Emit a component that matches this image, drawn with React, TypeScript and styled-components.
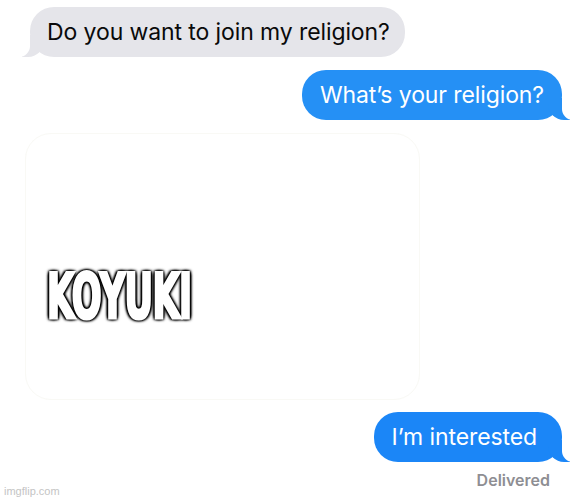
import React from "react";
import styled, { createGlobalStyle, css } from "styled-components";

const Global = createGlobalStyle`
  html, body { margin: 0; padding: 0; background: #ffffff; }
  body {
    font-family: Inter, "Liberation Sans", sans-serif;
    -webkit-font-smoothing: antialiased;
  }
`;

const Page = styled.div`
  position: relative;
  width: 588px;
  height: 500px;
  box-sizing: border-box;
  padding-top: 7px;
  display: flex;
  flex-direction: column;
  overflow: hidden;
`;

const Row = styled.div<{ $side: "left" | "right"; $mt?: number }>`
  display: flex;
  justify-content: ${(p) => (p.$side === "left" ? "flex-start" : "flex-end")};
  padding: ${(p) => (p.$side === "left" ? "0 0 0 30px" : "0 26px 0 0")};
  margin-top: ${(p) => p.$mt ?? 0}px;
`;

const Bubble = styled.div<{ $from: "them" | "me"; $tone?: string; $pr?: number }>`
  position: relative;
  height: 50px;
  box-sizing: border-box;
  display: flex;
  align-items: center;
  padding: 0 15px 0 17px;
  border-radius: 24px;
  font-size: 23px;
  letter-spacing: -0.1px;
  white-space: nowrap;
  ${(p) =>
    p.$from === "them"
      ? css`
          background: #e5e5ea;
          color: #0a0a0a;
          &::before {
            content: "";
            position: absolute;
            bottom: 0;
            left: -8px;
            width: 22px;
            height: 22px;
            background: #e5e5ea;
            border-bottom-right-radius: 16px;
          }
          &::after {
            content: "";
            position: absolute;
            bottom: 0;
            left: -26px;
            width: 26px;
            height: 22px;
            background: #ffffff;
            border-bottom-right-radius: 11px;
          }
        `
      : css`
          background: ${p.$tone ?? "#2590f5"};
          color: #ffffff;
          padding: 0 ${p.$pr ?? 18}px 0 18px;
          &::before {
            content: "";
            position: absolute;
            bottom: 0;
            right: -8px;
            width: 22px;
            height: 22px;
            background: ${p.$tone ?? "#2590f5"};
            border-bottom-left-radius: 16px;
          }
          &::after {
            content: "";
            position: absolute;
            bottom: 0;
            right: -26px;
            width: 26px;
            height: 22px;
            background: #ffffff;
            border-bottom-left-radius: 11px;
          }
        `}
`;

const BubbleText = styled.span`
  position: relative;
  z-index: 1;
`;

const ImageCard = styled.div`
  margin: 13px 0 0 25px;
  width: 395px;
  height: 267px;
  box-sizing: border-box;
  border: 1px solid #f9f9f5;
  border-radius: 26px;
  display: flex;
  align-items: flex-start;
  padding: 132px 0 0 21px;
`;

const Caption = styled.div`
  font-family: "DejaVu Sans Condensed", "DejaVu Sans", sans-serif;
  font-weight: bold;
  font-size: 62px;
  line-height: 1;
  color: #ffffff;
  transform: scaleX(0.63);
  transform-origin: left top;
  letter-spacing: -1px;
  -webkit-text-stroke: 3px #ffffff;
  text-shadow: 3px 0 2px #000, -3px 0 2px #000, 0 2px 2px #000,
    0 -2px 2px #000, 3px 2px 3px #000, -3px -2px 3px #000, 3px -2px 3px #000,
    -3px 2px 3px #000, 0 0 6px #000;
`;

const Status = styled.div`
  display: flex;
  justify-content: flex-end;
  padding-right: 38px;
  margin-top: 8px;
  font-size: 16px;
  font-weight: 600;
  color: #8e8e93;
`;

const Watermark = styled.div`
  position: absolute;
  left: 4px;
  bottom: 3px;
  font-family: "Liberation Sans", Arial, sans-serif;
  font-size: 11px;
  color: #c4c4c4;
`;

export default function App() {
  return (
    <>
      <Global />
      <Page>
        <Row $side="left">
          <Bubble $from="them">
            <BubbleText>Do you want to join my religion?</BubbleText>
          </Bubble>
        </Row>
        <Row $side="right" $mt={13}>
          <Bubble $from="me">
            <BubbleText>What’s your religion?</BubbleText>
          </Bubble>
        </Row>
        <ImageCard>
          <Caption>KOYUKI</Caption>
        </ImageCard>
        <Row $side="right" $mt={12}>
          <Bubble $from="me" $tone="#1b86f7" $pr={25}>
            <BubbleText>I’m interested</BubbleText>
          </Bubble>
        </Row>
        <Status>Delivered</Status>
        <Watermark>imgflip.com</Watermark>
      </Page>
    </>
  );
}
